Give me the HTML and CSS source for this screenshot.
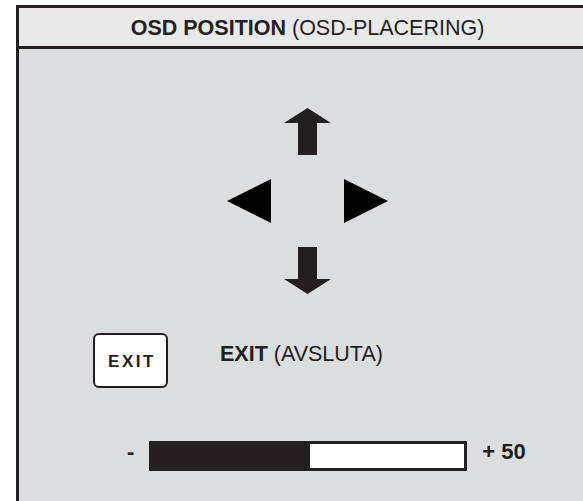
FILE: index.html
```html
<!DOCTYPE html>
<html lang="sv">
<head>
  <meta charset="UTF-8" />
  <meta name="viewport" content="width=device-width, initial-scale=1.0" />
  <title>OSD Position</title>
  <link rel="stylesheet" href="styles.css">
</head>
<body>
  <div class="panel">
    <div class="panel-header">
      <b>OSD POSITION</b> (OSD-PLACERING)
    </div>

    <div class="panel-body">
      <div class="pad">
        <svg class="arrow" width="47" height="47" viewBox="0 0 47 47">
          <path d="M23.5 0 L47 15 L33 15 L33 47 L14 47 L14 15 L0 15 Z" fill="#231f20"/>
        </svg>
        <div class="pad-row">
          <svg width="44" height="44" viewBox="0 0 44 44">
            <path d="M0 22 L44 0 L44 44 Z" fill="#000"/>
          </svg>
          <svg width="44" height="44" viewBox="0 0 44 44">
            <path d="M44 22 L0 0 L0 44 Z" fill="#000"/>
          </svg>
        </div>
        <svg class="arrow" width="47" height="47" viewBox="0 0 47 47">
          <path d="M23.5 47 L47 32 L33 32 L33 0 L14 0 L14 32 L0 32 Z" fill="#231f20"/>
        </svg>
      </div>

      <div class="exit-row">
        <div class="key">EXIT</div>
        <div class="exit-label"><b>EXIT</b> (AVSLUTA)</div>
      </div>

      <div class="level-row">
        <span class="sign">-</span>
        <div class="level">
          <div class="level-fill" style="width: 50.5%"></div>
        </div>
        <span class="sign">+ 50</span>
      </div>
    </div>
  </div>
</body>
</html>
```

FILE: styles.css
```css
body {
  margin: 0;
  font-family: "Liberation Sans", Arial, sans-serif;
  color: #231f20;
  background: #fff;
  overflow: hidden;
  height: 501px;
}
.panel {
  margin: 5px 0 0 16px;
  width: 577px;
  border-top: 3px solid #231f20;
  border-left: 3px solid #231f20;
}
.panel-header {
  height: 38px;
  line-height: 40px;
  text-align: center;
  font-size: 21.5px;
  background: #e9e9ea;
  border-bottom: 3px solid #231f20;
}
.panel-body {
  background: #dcdddf;
  height: 460px;
  padding-top: 59px;
  box-sizing: border-box;
}
.pad {
  display: flex;
  flex-direction: column;
  align-items: center;
  gap: 24px;
}
.pad svg {
  display: block;
}
.pad-row {
  display: flex;
  gap: 73px;
}
.exit-row {
  display: flex;
  align-items: flex-start;
  gap: 52px;
  margin-top: 39px;
  padding-left: 74px;
}
.key {
  width: 75px;
  height: 55px;
  box-sizing: border-box;
  border: 2px solid #231f20;
  border-radius: 6px;
  background: #fff;
  font-size: 17px;
  font-weight: bold;
  letter-spacing: 2.5px;
  display: flex;
  align-items: center;
  justify-content: center;
  padding: 3px 0 0 3px;
}
.exit-label {
  font-size: 21.5px;
  padding-top: 9px;
}
.level-row {
  display: flex;
  align-items: center;
  margin-top: 53px;
  padding-left: 108px;
  font-size: 22px;
  font-weight: bold;
}
.level {
  width: 318px;
  height: 30px;
  box-sizing: border-box;
  border: 3px solid #231f20;
  background: #fff;
  margin: 0 15px 0 15px;
}
.level-fill {
  height: 100%;
  background: #231f20;
}
.sign {
  margin-top: -8px;
}
```
